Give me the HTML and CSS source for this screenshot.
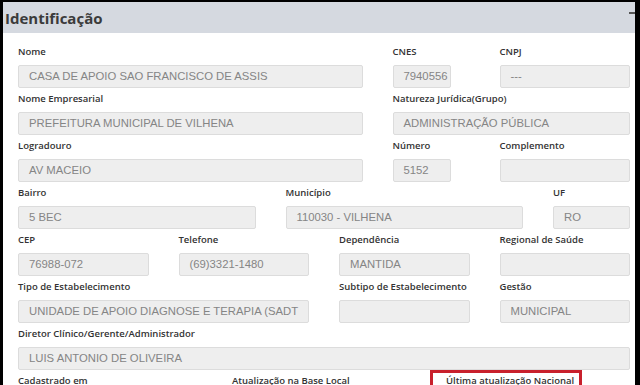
FILE: index.html
```html
<!DOCTYPE html>
<html lang="pt-BR">
<head>
  <meta charset="UTF-8" />
  <title>Identificação</title>
  <link rel="stylesheet" href="styles.css">
</head>
<body>
  <div class="panel">
    <div class="panel-heading">
      <h3>Identificação</h3>
      <span class="collapse-icon"></span>
    </div>

    <div class="panel-body">
      <div class="grid">
        <div class="field span-7">
          <label>Nome</label>
          <div class="form-control">CASA DE APOIO SAO FRANCISCO DE ASSIS</div>
        </div>
        <div class="field span-2">
          <label>CNES</label>
          <div class="form-control short">7940556</div>
        </div>
        <div class="field span-3">
          <label>CNPJ</label>
          <div class="form-control">---</div>
        </div>

        <div class="field span-7">
          <label>Nome Empresarial</label>
          <div class="form-control">PREFEITURA MUNICIPAL DE VILHENA</div>
        </div>
        <div class="field span-5">
          <label>Natureza Jurídica(Grupo)</label>
          <div class="form-control">ADMINISTRAÇÃO PÚBLICA</div>
        </div>

        <div class="field span-7">
          <label>Logradouro</label>
          <div class="form-control">AV MACEIO</div>
        </div>
        <div class="field span-2">
          <label>Número</label>
          <div class="form-control short">5152</div>
        </div>
        <div class="field span-3">
          <label>Complemento</label>
          <div class="form-control"></div>
        </div>

        <div class="field span-5">
          <label>Bairro</label>
          <div class="form-control">5 BEC</div>
        </div>
        <div class="field span-5">
          <label>Município</label>
          <div class="form-control">110030 - VILHENA</div>
        </div>
        <div class="field span-2">
          <label>UF</label>
          <div class="form-control">RO</div>
        </div>

        <div class="field span-3">
          <label>CEP</label>
          <div class="form-control">76988-072</div>
        </div>
        <div class="field span-3">
          <label>Telefone</label>
          <div class="form-control">(69)3321-1480</div>
        </div>
        <div class="field span-3">
          <label>Dependência</label>
          <div class="form-control">MANTIDA</div>
        </div>
        <div class="field span-3">
          <label>Regional de Saúde</label>
          <div class="form-control"></div>
        </div>

        <div class="field span-6">
          <label>Tipo de Estabelecimento</label>
          <div class="form-control">UNIDADE DE APOIO DIAGNOSE E TERAPIA (SADT</div>
        </div>
        <div class="field span-3">
          <label>Subtipo de Estabelecimento</label>
          <div class="form-control"></div>
        </div>
        <div class="field span-3">
          <label>Gestão</label>
          <div class="form-control">MUNICIPAL</div>
        </div>

        <div class="field span-12">
          <label>Diretor Clínico/Gerente/Administrador</label>
          <div class="form-control">LUIS ANTONIO DE OLIVEIRA</div>
        </div>

        <div class="field span-4">
          <label>Cadastrado em</label>
        </div>
        <div class="field span-4">
          <label>Atualização na Base Local</label>
        </div>
        <div class="field span-4 highlight">
          <label>Última atualização Nacional</label>
        </div>
      </div>
    </div>
  </div>
</body>
</html>
```

FILE: styles.css
```css
html, body {
  margin: 0;
  padding: 0;
  height: 100%;
  overflow: hidden;
}
body {
  background-color: #000;
  font-family: "Open Sans", Arial, sans-serif;
  color: #333;
}
.panel {
  margin: 2px 0 0 3px;
  width: 632px;
  height: 400px;
  background-color: #fff;
  overflow: hidden;
}
.panel-heading {
  position: relative;
  height: 31px;
  background-color: #d5d9e0;
  display: flex;
  align-items: center;
  padding-left: 2px;
}
.panel-heading h3 {
  margin: 0;
  font-size: 15px;
  font-weight: 700;
  color: #3b3b3b;
}
.collapse-icon {
  position: absolute;
  right: -4px;
  top: 10px;
  width: 10px;
  height: 2px;
  background-color: #555;
}
.panel-body {
  padding: 12px 5px 0 15px;
}
.grid {
  display: grid;
  grid-template-columns: repeat(12, 1fr);
  column-gap: 30px;
  width: 612px;
}
.span-2 { grid-column: span 2; }
.span-3 { grid-column: span 3; }
.span-4 { grid-column: span 4; }
.span-5 { grid-column: span 5; }
.span-6 { grid-column: span 6; }
.span-7 { grid-column: span 7; }
.span-12 { grid-column: span 12; }
.field {
  position: relative;
  margin-bottom: 4px;
}
.field label {
  display: block;
  height: 14px;
  line-height: 14px;
  margin-bottom: 6px;
  font-size: 9.5px;
  font-weight: 600;
  color: #333;
  white-space: nowrap;
}
.form-control {
  box-sizing: border-box;
  height: 23px;
  line-height: 21px;
  padding: 0 10px;
  background-color: #eeeeee;
  border: 1px solid #dcdcdc;
  border-radius: 2px;
  font-family: "Liberation Sans", Arial, sans-serif;
  font-size: 11.3px;
  color: #858585;
  white-space: nowrap;
  overflow: hidden;
}
.form-control.short {
  width: 58px;
  padding: 0 6px 0 10px;
}
.highlight::after {
  content: "";
  position: absolute;
  left: -16px;
  top: -4px;
  width: 146px;
  height: 40px;
  border: 3px solid #c8202c;
}
```
